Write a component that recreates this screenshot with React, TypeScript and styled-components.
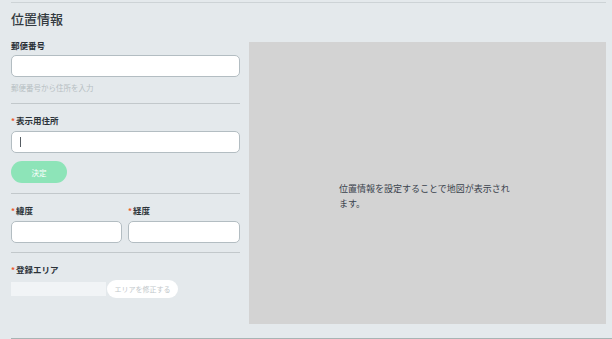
import React from 'react'
import styled, { createGlobalStyle } from 'styled-components'

const GlobalStyle = createGlobalStyle`
  html, body {
    margin: 0;
    padding: 0;
    background: #e4e9ec;
  }
  body {
    font-family: "Noto Sans CJK JP", "Noto Sans", sans-serif;
    color: #2e353b;
  }
`

const Page = styled.div`
  padding-top: 2px;
  margin-left: 11px;
  border-bottom: 1px solid #a7b4b4;
  width: 601px;
`

const Section = styled.section`
  margin-right: 6px;
  border-top: 1px solid #cdd3d6;
  padding-bottom: 14px;
`

const Title = styled.h2`
  margin: 6px 0 0;
  font-size: 13px;
  line-height: 20px;
  font-weight: 500;
  color: #333a40;
`

const Body = styled.div`
  display: grid;
  grid-template-columns: 229px 1fr;
  column-gap: 9px;
  margin-top: 10px;
`

const FormColumn = styled.div`
  display: flex;
  flex-direction: column;
`

const Label = styled.label<{ $required?: boolean; $gap?: number }>`
  display: block;
  margin-top: ${p => p.$gap ?? 0}px;
  font-size: 8.5px;
  line-height: 12px;
  font-weight: 700;
  color: #2b3238;

  &::before {
    content: ${p => (p.$required ? '"*"' : 'none')};
    color: #f0572a;
    font-size: 8px;
    margin-right: 1px;
  }
`

const Input = styled.input`
  box-sizing: border-box;
  display: block;
  width: 100%;
  height: 22px;
  margin-top: 4px;
  padding: 0 8px;
  background: #fff;
  border: 1px solid #b3bdc2;
  border-radius: 5px;
  font-size: 9px;
  font-family: inherit;
  outline: none;
`

const Caret = styled.span`
  display: block;
  position: relative;
  margin-top: 4px;

  &::after {
    content: '';
    position: absolute;
    left: 9px;
    top: 6px;
    width: 1px;
    height: 10px;
    background: #555c62;
  }
`

const Hint = styled.div`
  margin-top: 5px;
  font-size: 7.5px;
  line-height: 12px;
  color: #b6bec2;
`

const Divider = styled.hr<{ $gap: number }>`
  margin: ${p => p.$gap}px 0 0;
  border: 0;
  border-top: 1px solid #c2c8cb;
  height: 0;
`

const PillButton = styled.button<{ $variant: 'primary' | 'ghost' }>`
  box-sizing: border-box;
  font-family: inherit;
  border: 0;
  padding: 0;
  cursor: pointer;
  ${p =>
    p.$variant === 'primary'
      ? `
    width: 56px;
    height: 22px;
    margin-top: 8px;
    border-radius: 11px;
    background: #8de4b8;
    color: #fff;
    font-size: 7.5px;
  `
      : `
    width: 71px;
    height: 18px;
    border-radius: 9px;
    background: #fff;
    color: #c2c8cb;
    font-size: 7px;
  `}
`

const CoordGrid = styled.div`
  display: grid;
  grid-template-columns: 111px 1fr;
  column-gap: 6px;
  margin-top: 10px;
`

const AreaRow = styled.div`
  display: flex;
  align-items: center;
  margin-top: 4px;
`

const AreaBox = styled.div`
  width: 95px;
  height: 14px;
  background: #f1f4f6;
  margin-right: 1px;
`

const MapPanel = styled.div`
  margin-top: 3px;
  height: 282px;
  background: #d3d3d3;
  display: flex;
  align-items: center;
  justify-content: center;
  padding-top: 26px;
  box-sizing: border-box;
`

const MapMessage = styled.p`
  margin: 0;
  width: 177px;
  font-size: 9px;
  line-height: 15px;
  color: #3a424c;
`

export default function App() {
  return (
    <>
      <GlobalStyle />
      <Page>
        <Section>
          <Title>位置情報</Title>
          <Body>
            <FormColumn>
              <Label>郵便番号</Label>
              <Input />
              <Hint>郵便番号から住所を入力</Hint>
              <Divider $gap={9} />

              <Label $required $gap={10}>表示用住所</Label>
              <Caret>
                <Input style={{ marginTop: 0 }} />
              </Caret>
              <PillButton $variant="primary">決定</PillButton>
              <Divider $gap={10} />

              <CoordGrid>
                <div>
                  <Label $required>緯度</Label>
                  <Input />
                </div>
                <div>
                  <Label $required>経度</Label>
                  <Input />
                </div>
              </CoordGrid>
              <Divider $gap={9} />

              <Label $required $gap={10}>登録エリア</Label>
              <AreaRow>
                <AreaBox />
                <PillButton $variant="ghost">エリアを修正する</PillButton>
              </AreaRow>
            </FormColumn>
            <MapPanel>
              <MapMessage>位置情報を設定することで地図が表示されます。</MapMessage>
            </MapPanel>
          </Body>
        </Section>
      </Page>
    </>
  )
}
